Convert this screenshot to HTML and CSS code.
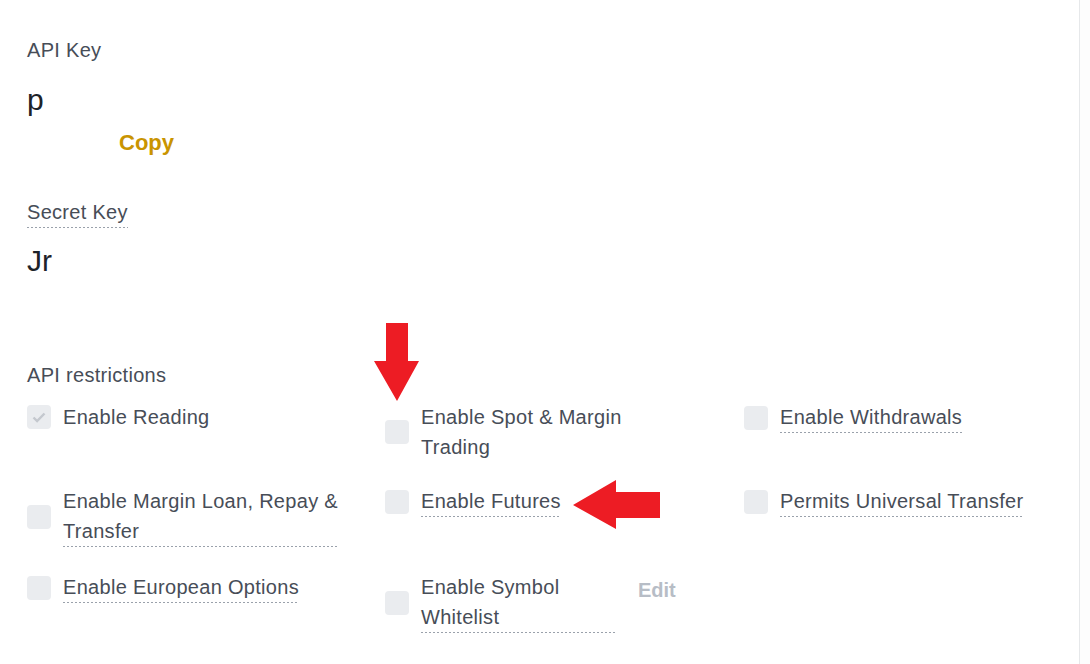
FILE: index.html
```html
<!DOCTYPE html>
<html>
<head>
<meta charset="utf-8">
<link rel="stylesheet" href="styles.css">
</head>
<body>
<div class="page">
  <main class="panel">
    <div class="field-label">API Key</div>
    <div class="key-value">p</div>
    <div class="copy">Copy</div>

    <div class="field-label dashed secret">Secret Key</div>
    <div class="key-value secret-value">Jr</div>

    <div class="field-label restrictions">API restrictions</div>
    <div class="grid">
      <div class="item">
        <span class="box checked"><svg viewBox="0 0 24 24" width="24" height="24"><path d="M6.5 12.5l3.6 3.6 7.4-7.6" fill="none" stroke="#c4c8ce" stroke-width="2.4"/></svg></span>
        <span class="label">Enable Reading</span>
      </div>
      <div class="item">
        <span class="box"></span>
        <span class="label medium">Enable Spot &amp; Margin Trading</span>
      </div>
      <div class="item">
        <span class="box"></span>
        <span class="label dashed">Enable Withdrawals</span>
      </div>

      <div class="item">
        <span class="box"></span>
        <span class="label dashed">Enable Margin Loan, Repay &amp; Transfer</span>
      </div>
      <div class="item">
        <span class="box"></span>
        <span class="label dashed">Enable Futures</span>
      </div>
      <div class="item">
        <span class="box"></span>
        <span class="label dashed">Permits Universal Transfer</span>
      </div>

      <div class="item">
        <span class="box"></span>
        <span class="label dashed">Enable European Options</span>
      </div>
      <div class="item">
        <span class="box"></span>
        <span class="label dashed narrow">Enable Symbol Whitelist</span>
        <span class="edit">Edit</span>
      </div>
      <div class="item"></div>
    </div>
  </main>
  <div class="gutter"></div>

  <svg class="arrow arrow-down" width="46" height="80" viewBox="0 0 46 80">
    <polygon points="12,0 34,0 34,38 45,38 23,78 0,38 12,38" fill="#ed1c24"/>
  </svg>
  <svg class="arrow arrow-left" width="88" height="50" viewBox="0 0 88 50">
    <polygon points="0,25 43,0 43,12 87,12 87,38 43,38 43,49" fill="#ed1c24"/>
  </svg>
</div>
</body>
</html>
```

FILE: styles.css
```css
* { box-sizing: border-box; }

html, body {
  margin: 0;
  padding: 0;
  background: #ffffff;
}

body {
  font-family: "Liberation Sans", Arial, sans-serif;
  color: #474d57;
}

.page {
  position: relative;
  display: flex;
  width: 1090px;
  height: 664px;
  overflow: hidden;
}

.panel {
  width: 1080px;
  flex: none;
  padding: 35px 0 0 27px;
  border-right: 1px solid #e6e8ea;
}

.gutter {
  flex: 1;
  background: #fdfdfd;
}

.field-label {
  font-size: 20px;
  line-height: 30px;
  letter-spacing: 0.3px;
  color: #474d57;
}

.key-value {
  margin-top: 15px;
  font-size: 30px;
  line-height: 40px;
  color: #1e2329;
}

.copy {
  margin-left: 92px;
  margin-top: 8px;
  font-size: 22px;
  line-height: 30px;
  font-weight: 700;
  color: #c99400;
}

.dashed {
  background-image: linear-gradient(to right, #9aa1ab 50%, transparent 50%);
  background-size: 4px 1px;
  background-repeat: repeat-x;
  background-position: left bottom;
}

.field-label.secret {
  display: inline-block;
  margin-top: 40px;
  line-height: 29px;
  padding-bottom: 1px;
}

.secret-value {
  margin-top: 13px;
}

.restrictions {
  margin-top: 79px;
}

.grid {
  margin-top: 12px;
  display: grid;
  grid-template-columns: 358px 359px 1fr;
  grid-template-rows: auto auto auto;
  row-gap: 24px;
  align-items: start;
}

.grid > .item:nth-child(n+7) {
  margin-top: 1px;
}

.item {
  display: flex;
  align-items: center;
  gap: 12px;
}

.box {
  flex: none;
  width: 24px;
  height: 24px;
  border-radius: 4px;
  background: #eaecef;
  display: flex;
}

.label {
  font-size: 20px;
  line-height: 30px;
  letter-spacing: 0.3px;
  max-width: 276px;
  color: #474d57;
}

.label.dashed {
  padding-bottom: 1px;
}

.label.medium {
  max-width: 240px;
}

.label.narrow {
  max-width: 196px;
}

.edit {
  align-self: flex-start;
  margin-top: 3px;
  margin-left: 9px;
  font-size: 20px;
  line-height: 30px;
  font-weight: 700;
  color: #b7bdc6;
}

.arrow {
  position: absolute;
}

.arrow-down {
  left: 374px;
  top: 323px;
}

.arrow-left {
  left: 573px;
  top: 480px;
}
```
